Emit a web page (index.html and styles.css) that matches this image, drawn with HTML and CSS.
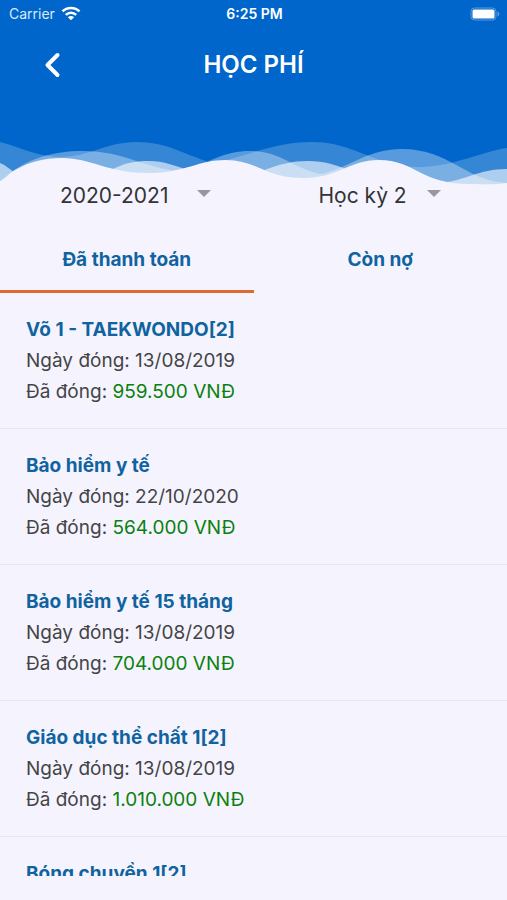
FILE: index.html
```html
<!DOCTYPE html>
<html lang="vi">
<head>
<meta charset="utf-8">
<meta name="viewport" content="width=device-width, initial-scale=1">
<title>Học phí</title>
<link rel="stylesheet" href="styles.css">
</head>
<body>
<div class="app">
  <header class="header">
    <div class="status">
      <div class="carrier">
        <span>Carrier</span>
        <svg class="wifi" viewBox="0 0 20 15" aria-hidden="true">
          <path d="M1.500 5.400C6 .8 14 .8 18.500 5.400" />
          <path d="M4.800 8.900C7.800 6 12.200 6 15.200 8.900" />
          <path class="dot" d="M10 14.200L6.900 11.200C8.700 9.600 11.300 9.600 13.100 11.200Z" />
        </svg>
      </div>
      <span class="clock">6:25 PM</span>
      <svg class="battery" viewBox="0 0 30 14" aria-hidden="true">
        <rect class="case" x="1" y="1" width="25" height="12" rx="3.500" />
        <rect class="level" x="2.500" y="2.500" width="22" height="9" rx="1.500" />
        <path class="tip" d="M27.500 4.500C30 5.200 30 8.800 27.500 9.500Z" />
      </svg>
    </div>
    <div class="bar">
      <button class="back" type="button" aria-label="Quay lại">
        <svg viewBox="0 0 18 26" aria-hidden="true"><path d="M13.500 3L3.500 13L13.500 23" /></svg>
      </button>
      <h1 class="title">HỌC PHÍ</h1>
    </div>
    <svg class="waves" viewBox="0 0 507 54" preserveAspectRatio="none" aria-hidden="true">
      <path class="wave-far" d="M0 7C20 12 38 22 60 22C90 22 105 7 137 7C170 7 190 23 214 28C250 20 275 7 312 7C355 7 375 32 420 32C452 32 480 17 507 13V54H0Z" />
      <path class="wave-mid" d="M13 36C30 24 52 16 83 16C125 16 145 34 185 37C210 26 225 16 250 16C280 16 292 33 320 39C345 36 365 14 402 14C450 14 465 46 507 48V54H13Z" />
      <path class="wave-near" d="M0 28C6 30 10 35 16 38L26 50H0Z" />
      <path class="wave-near" d="M113 34C125 28 135 26 148 26C165 26 175 31 185 34V54H113Z" />
      <path class="wave-near" d="M262 36C280 29 292 26 308 26C325 26 335 30 346 34V54H262Z" />
      <path class="wave-near" d="M440 48C465 46 478 34 507 34V54H440Z" />
      <path class="wave-front" d="M0 46C6 43 10 37 17 34C30 27 43 23 62 23C92 23 108 39 153 38C185 37 200 25 225 25C257 25 265 43 303 43C340 43 348 25 379 25C415 25 420 49 470 49C485 49 495 50 507 48V54H0Z" />
    </svg>
  </header>

  <div class="filters">
    <label class="picker picker-year">
      <select aria-label="Năm học"><option>2020-2021</option></select>
      <svg class="caret" viewBox="0 0 14 8" aria-hidden="true"><path d="M0 1H14L7 8Z" /></svg>
    </label>
    <label class="picker picker-term">
      <select aria-label="Học kỳ"><option>Học kỳ 2</option></select>
      <svg class="caret" viewBox="0 0 14 8" aria-hidden="true"><path d="M0 1H14L7 8Z" /></svg>
    </label>
  </div>

  <div class="tabs" role="tablist">
    <button class="tab tab-active" type="button" role="tab" aria-selected="true">Đã thanh toán</button>
    <button class="tab" type="button" role="tab" aria-selected="false">Còn nợ</button>
  </div>

  <main class="list">
    <article class="fee">
      <h2>Võ 1 - TAEKWONDO[2]</h2>
      <p>Ngày đóng: 13/08/2019</p>
      <p>Đã đóng: <span class="amount">959.500 VNĐ</span></p>
    </article>
    <article class="fee">
      <h2>Bảo hiểm y tế</h2>
      <p>Ngày đóng: 22/10/2020</p>
      <p>Đã đóng: <span class="amount">564.000 VNĐ</span></p>
    </article>
    <article class="fee">
      <h2>Bảo hiểm y tế 15 tháng</h2>
      <p>Ngày đóng: 13/08/2019</p>
      <p>Đã đóng: <span class="amount">704.000 VNĐ</span></p>
    </article>
    <article class="fee">
      <h2>Giáo dục thể chất 1[2]</h2>
      <p>Ngày đóng: 13/08/2019</p>
      <p>Đã đóng: <span class="amount">1.010.000 VNĐ</span></p>
    </article>
    <article class="fee">
      <h2>Bóng chuyền 1[2]</h2>
    </article>
  </main>
</div>
</body>
</html>
```

FILE: styles.css
```css
* {
  box-sizing: border-box;
}

body {
  margin: 0;
  background: #f5f4fe;
  color: #444446;
  font-family: Inter, "Liberation Sans", sans-serif;
}

button,
select {
  margin: 0;
  padding: 0;
  border: 0;
  background: none;
  color: inherit;
  font: inherit;
}

.app {
  display: flex;
  flex-direction: column;
  height: 100vh;
  padding-bottom: 24px;
}

.header {
  background: #0066cb;
  color: #fff;
}

.status {
  display: grid;
  grid-template-columns: 1fr auto 1fr;
  align-items: center;
  height: 27px;
  padding: 0 7px 0 9px;
  font-size: 14px;
}

.carrier {
  display: flex;
  align-items: center;
  gap: 6px;
  color: #dbe9f9;
}

.wifi {
  width: 20px;
  height: 15px;
  fill: none;
  stroke: #fff;
  stroke-width: 2.5;
}

.wifi .dot {
  fill: #fff;
  stroke: none;
}

.clock {
  font-weight: 600;
}

.battery {
  justify-self: end;
  width: 30px;
  height: 14px;
}

.battery .case {
  fill: none;
  stroke: #5c9bdf;
}

.battery .level {
  fill: #fff;
}

.battery .tip {
  fill: #5c9bdf;
}

.bar {
  display: grid;
  grid-template-columns: 1fr auto 1fr;
  align-items: center;
  height: 75px;
  padding-left: 44px;
  padding-right: 44px;
}

.back {
  display: flex;
  justify-self: start;
  cursor: pointer;
}

.back svg {
  width: 18px;
  height: 26px;
  fill: none;
  stroke: #fff;
  stroke-width: 4;
  stroke-linecap: round;
  stroke-linejoin: round;
}

.title {
  margin: 0;
  font-size: 24px;
  font-weight: 600;
}

.waves {
  display: block;
  width: 100%;
  height: 54px;
  margin-top: 33px;
}

.wave-far {
  fill: #fff;
  fill-opacity: 0.21;
}

.wave-mid {
  fill: #fff;
  fill-opacity: 0.34;
}

.wave-near {
  fill: #fff;
  fill-opacity: 0.6;
}

.wave-front {
  fill: #f5f4fe;
}

.filters,
.tabs {
  display: grid;
  grid-template-columns: 1fr 1fr;
}

.filters {
  height: 38px;
  margin-top: -13px;
  color: #333336;
  font-size: 21px;
}

.picker {
  display: flex;
  align-items: center;
  gap: 12px;
}

.picker-year {
  padding-left: 60px;
}

.picker-term {
  padding-left: 65px;
}

.picker select {
  width: 125px;
  height: 32px;
  appearance: none;
}

.picker-term select {
  width: 96px;
}

.caret {
  width: 14px;
  height: 8px;
  margin-bottom: 4px;
  fill: #98979f;
}

.tabs {
  color: #10639f;
  font-size: 19px;
  font-weight: 700;
}

.tab {
  height: 79px;
  padding-top: 14px;
  border-bottom: 3px solid transparent;
  cursor: pointer;
}

.tab-active {
  border-color: #dd6a2f;
}

.list {
  flex: 1;
  min-height: 0;
  overflow: hidden;
}

.fee {
  padding: 21px 26px;
  border-bottom: 1px solid #e9e8f2;
  font-size: 19px;
  line-height: 31px;
}

.fee h2,
.fee p {
  margin: 0;
  font-size: inherit;
}

.fee h2 {
  color: #10639f;
  font-weight: 700;
}

.amount {
  color: #0b800f;
}
```
